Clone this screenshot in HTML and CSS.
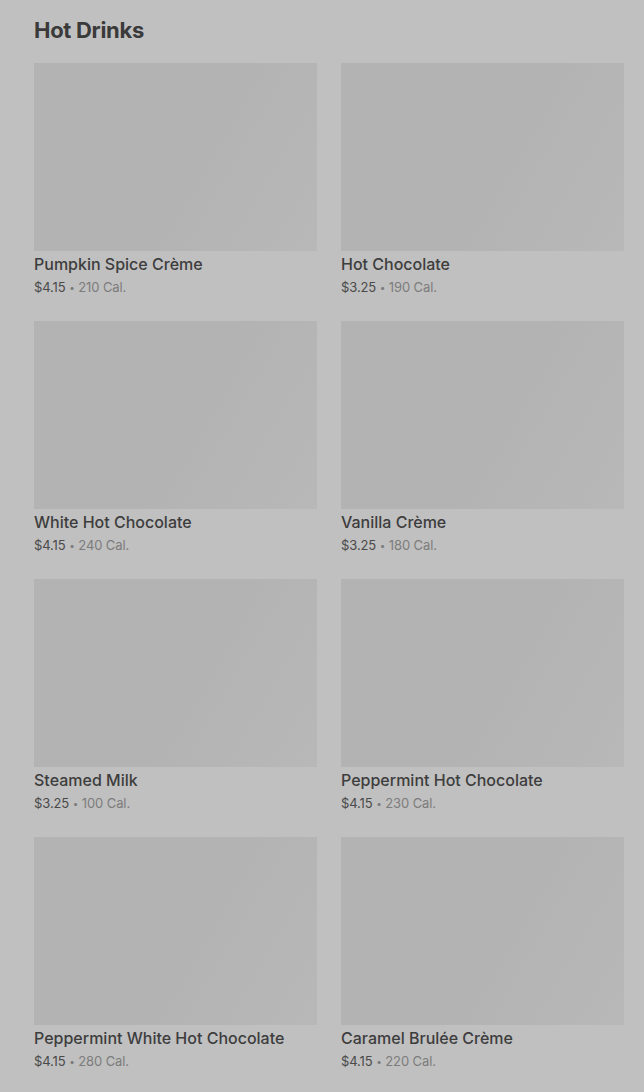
FILE: index.html
```html
<!DOCTYPE html>
<html lang="en">
<head>
    <meta charset="UTF-8">
    <meta name="viewport" content="width=device-width, initial-scale=1.0">
    <title>Hot Drinks</title>
    <link rel="stylesheet" href="styles.css">
</head>
<body>
    <section class="menu-section">
        <h2 class="section-title">Hot Drinks</h2>
        <div class="item-grid">
            <div class="item">
                <div class="item-image"></div>
                <div class="item-name">Pumpkin Spice Crème</div>
                <div class="item-meta"><span class="price">$4.15</span> <span class="dot">•</span> 210 Cal.</div>
            </div>
            <div class="item">
                <div class="item-image"></div>
                <div class="item-name">Hot Chocolate</div>
                <div class="item-meta"><span class="price">$3.25</span> <span class="dot">•</span> 190 Cal.</div>
            </div>
            <div class="item">
                <div class="item-image"></div>
                <div class="item-name">White Hot Chocolate</div>
                <div class="item-meta"><span class="price">$4.15</span> <span class="dot">•</span> 240 Cal.</div>
            </div>
            <div class="item">
                <div class="item-image"></div>
                <div class="item-name">Vanilla Crème</div>
                <div class="item-meta"><span class="price">$3.25</span> <span class="dot">•</span> 180 Cal.</div>
            </div>
            <div class="item">
                <div class="item-image"></div>
                <div class="item-name">Steamed Milk</div>
                <div class="item-meta"><span class="price">$3.25</span> <span class="dot">•</span> 100 Cal.</div>
            </div>
            <div class="item">
                <div class="item-image"></div>
                <div class="item-name">Peppermint Hot Chocolate</div>
                <div class="item-meta"><span class="price">$4.15</span> <span class="dot">•</span> 230 Cal.</div>
            </div>
            <div class="item">
                <div class="item-image"></div>
                <div class="item-name">Peppermint White Hot Chocolate</div>
                <div class="item-meta"><span class="price">$4.15</span> <span class="dot">•</span> 280 Cal.</div>
            </div>
            <div class="item">
                <div class="item-image"></div>
                <div class="item-name">Caramel Brulée Crème</div>
                <div class="item-meta"><span class="price">$4.15</span> <span class="dot">•</span> 220 Cal.</div>
            </div>
        </div>
    </section>
</body>
</html>
```

FILE: styles.css
```css
body {
    font-family: Inter, "Noto Sans", Arial, sans-serif;
    margin: 0;
    padding: 0;
    background-color: #c0c0c0;
    color: #3b3b3b;
    overflow: hidden;
}
.menu-section {
    padding: 15px 20px 0 34px;
}
.section-title {
    margin: 0 0 18px;
    font-size: 22px;
    line-height: 30px;
    font-weight: 700;
    letter-spacing: -0.3px;
    color: #3a3a3a;
}
.item-grid {
    display: grid;
    grid-template-columns: 1fr 1fr;
    column-gap: 24px;
    row-gap: 24px;
}
.item-image {
    height: 188px;
    background: linear-gradient(120deg, #b3b3b3 55%, #b8b8b8 100%);
}
.item-name {
    font-size: 16px;
    line-height: 26px;
    font-weight: 500;
    color: #3d3d3d;
}
.item-meta {
    height: 20px;
    font-size: 13px;
    line-height: 20px;
    letter-spacing: -0.1px;
    color: #7c7c7c;
}
.price {
    color: #4a4a4a;
}
.dot {
    font-size: 10px;
    line-height: 1;
    vertical-align: 1px;
}
```
